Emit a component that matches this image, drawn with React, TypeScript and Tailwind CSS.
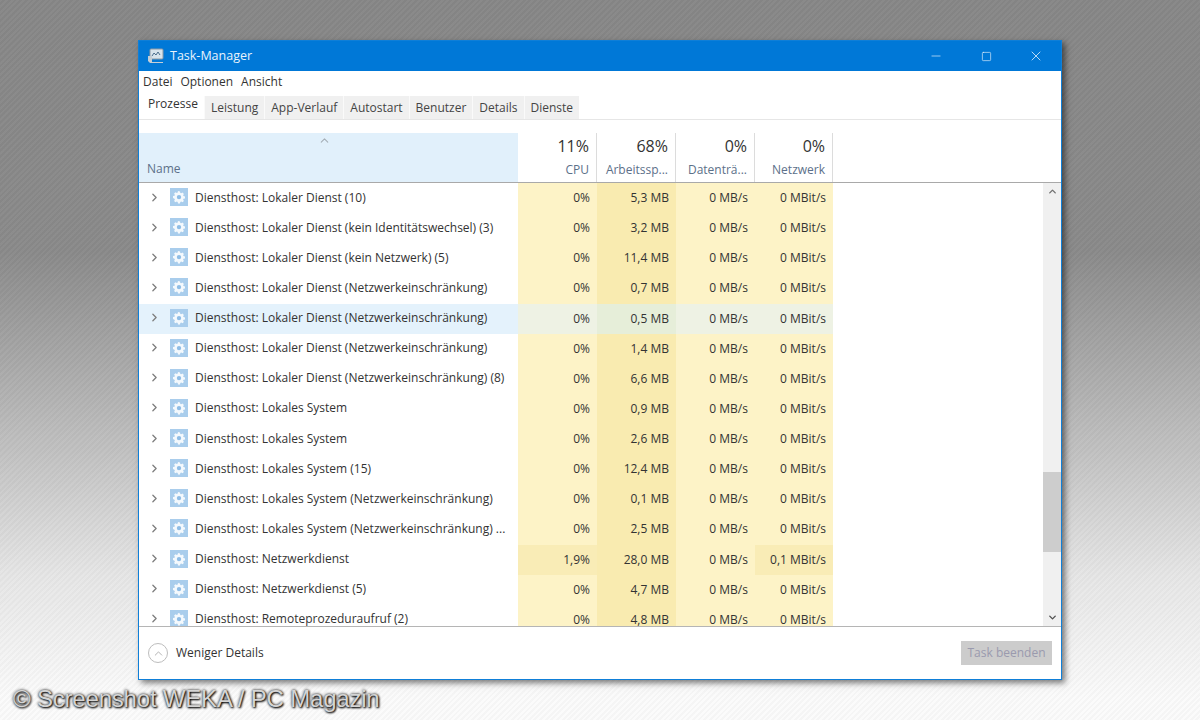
import { ChevronRight, ChevronUp, ChevronDown, Minus, Square, X } from "lucide-react";

const tabs = ["Leistung", "App-Verlauf", "Autostart", "Benutzer", "Details", "Dienste"];

const rows = [
  ["Diensthost: Lokaler Dienst (10)", "0%", "5,3 MB", "0 MB/s", "0 MBit/s"],
  ["Diensthost: Lokaler Dienst (kein Identitätswechsel) (3)", "0%", "3,2 MB", "0 MB/s", "0 MBit/s"],
  ["Diensthost: Lokaler Dienst (kein Netzwerk) (5)", "0%", "11,4 MB", "0 MB/s", "0 MBit/s"],
  ["Diensthost: Lokaler Dienst (Netzwerkeinschränkung)", "0%", "0,7 MB", "0 MB/s", "0 MBit/s"],
  ["Diensthost: Lokaler Dienst (Netzwerkeinschränkung)", "0%", "0,5 MB", "0 MB/s", "0 MBit/s"],
  ["Diensthost: Lokaler Dienst (Netzwerkeinschränkung)", "0%", "1,4 MB", "0 MB/s", "0 MBit/s"],
  ["Diensthost: Lokaler Dienst (Netzwerkeinschränkung) (8)", "0%", "6,6 MB", "0 MB/s", "0 MBit/s"],
  ["Diensthost: Lokales System", "0%", "0,9 MB", "0 MB/s", "0 MBit/s"],
  ["Diensthost: Lokales System", "0%", "2,6 MB", "0 MB/s", "0 MBit/s"],
  ["Diensthost: Lokales System (15)", "0%", "12,4 MB", "0 MB/s", "0 MBit/s"],
  ["Diensthost: Lokales System (Netzwerkeinschränkung)", "0%", "0,1 MB", "0 MB/s", "0 MBit/s"],
  ["Diensthost: Lokales System (Netzwerkeinschränkung) ...", "0%", "2,5 MB", "0 MB/s", "0 MBit/s"],
  ["Diensthost: Netzwerkdienst", "1,9%", "28,0 MB", "0 MB/s", "0,1 MBit/s"],
  ["Diensthost: Netzwerkdienst (5)", "0%", "4,7 MB", "0 MB/s", "0 MBit/s"],
  ["Diensthost: Remoteprozeduraufruf (2)", "0%", "4,8 MB", "0 MB/s", "0 MBit/s"],
];

const headers = [
  ["11%", "CPU", "w-[79px]"],
  ["68%", "Arbeitssp...", "w-[79px]"],
  ["0%", "Datenträ...", "w-[79px]"],
  ["0%", "Netzwerk", "w-[78px]"],
];

const ServiceIcon = () => (
  <svg width="18" height="18" viewBox="0 0 18 18" className="shrink-0">
    <rect width="18" height="18" fill="#a9cdec" />
    <path
      d="M9 3.2l1 .2.3 1.5.9.4 1.3-.8 1.4 1.4-.8 1.3.4.9 1.5.3v2l-1.5.3-.4.9.8 1.3-1.4 1.4-1.3-.8-.9.4-.3 1.5H8l-.3-1.5-.9-.4-1.3.8-1.4-1.4.8-1.3-.4-.9L3 10.1v-2l1.5-.3.4-.9-.8-1.3 1.4-1.4 1.3.8.9-.4.3-1.5z"
      fill="#f4f9fd"
    />
    <circle cx="9" cy="9.1" r="2.2" fill="#8fbde6" />
  </svg>
);

const App = () => {
  return (
    <div className="h-[720px] w-[1200px] overflow-hidden relative pt-[40px] pl-[138px] bg-[repeating-linear-gradient(135deg,rgba(255,255,255,0.025)_0px,rgba(255,255,255,0.025)_2px,rgba(0,0,0,0.025)_2px,rgba(0,0,0,0.025)_4px),linear-gradient(180deg,#878787_0%,#8a8a8a_35%,#c0c0c0_62%,#e6e6e6_80%,#fbfbfb_97%)] font-['Open_Sans','Noto_Sans',sans-serif]">
      <div className="w-[924px] h-[640px] flex flex-col border border-[#0f7fd8] bg-white shadow-[3px_3px_6px_rgba(0,0,0,0.5)]">
        {/* title bar */}
        <div className="h-[30px] shrink-0 bg-[#0078d7] flex items-center pl-[8px] text-white">
          <svg width="18" height="16" viewBox="0 0 18 16" className="shrink-0">
            <rect x="3" y="1" width="13" height="10" rx="1" fill="#d7e3ec" stroke="#8c98a3" />
            <path d="M5 8l2-3 2 2 2-3 2 3" stroke="#4b6d8c" fill="none" />
            <path d="M1 8h4v6h11v1H3l-2-2z" fill="#c5ced6" />
          </svg>
          <span className="ml-[5px] text-[12.5px] text-[#e8f3fc]">Task-Manager</span>
          <div className="ml-auto flex items-center">
            <div className="w-[50px] flex justify-center"><Minus size={14} strokeWidth={1.2} color="#dcecf9" /></div>
            <div className="w-[50px] flex justify-center"><Square size={11} strokeWidth={1.4} color="#e8f3fc" /></div>
            <div className="w-[50px] flex justify-center"><X size={16} strokeWidth={1.2} color="#e8f3fc" /></div>
          </div>
        </div>

        {/* menu */}
        <div className="h-[21px] shrink-0 flex items-center gap-[8px] pl-[4px] text-[12px] text-[#333]">
          <span>Datei</span>
          <span>Optionen</span>
          <span>Ansicht</span>
        </div>

        {/* tabs */}
        <div className="h-[28px] shrink-0 flex items-end border-b border-[#e6e6e6] pl-[2px] border-t-[#f4f4f4] text-[12px] text-[#444]">
          <div className="h-[27px] w-[63px] pl-[7px] pt-[3px] bg-white text-[#333]">Prozesse</div>
          {tabs.map((t) => (
            <div key={t} className="h-[23px] px-[6px] flex items-center bg-[#f0f0f0] border-l border-[#fafafa]">
              {t}
            </div>
          ))}
        </div>

        {/* column headers */}
        <div className="mt-[13px] h-[50px] shrink-0 flex border-b border-[#a9a9a9]">
          <div className="w-[379px] bg-[#e1f0fb] relative flex items-end pl-[8px] pb-[4px] text-[12px] text-[#5c7089]">
            <ChevronUp size={13} color="#a5aeb6" strokeWidth={2} className="absolute left-[179px] top-[1px]" />
            Name
          </div>
          {headers.map(([pct, label, w]) => (
            <div key={label} className={`${w} border-r border-[#dcdcdc] flex flex-col items-end pr-[7px]`}>
              <span className="text-[16px] leading-[20px] mt-[3px] text-[#333]">{pct}</span>
              <span className="text-[12px] leading-[16px] mt-[6px] text-[#5c7089]">{label}</span>
            </div>
          ))}
        </div>

        {/* rows */}
        <div className="h-[444px] shrink-0 overflow-hidden flex relative border-b border-[#b5b5b5]">
          <div className="w-[904px] shrink-0">
            {rows.map((r, i) => {
              const hover = i === 4;
              const busy = i === 12;
              return (
                <div key={i} className="h-[30.13px] flex items-center text-[12px] text-[#333]">
                  <div className={`w-[379px] h-full flex items-center pl-[9px] ${hover ? "bg-[#e4f2fc]" : ""}`}>
                    <ChevronRight size={13} color="#7d7d7d" strokeWidth={2.4} className="mb-[2px]" />
                    <div className="ml-[9px] mb-[2px]"><ServiceIcon /></div>
                    <span className="ml-[7px] whitespace-nowrap mb-[1px]">{r[0]}</span>
                  </div>
                  <div className={`w-[79px] h-full flex items-center justify-end pr-[7px] ${hover ? "bg-[#eef2e4]" : busy ? "bg-[#f9ecb6]" : "bg-[#fdf3c7]"}`}>{r[1]}</div>
                  <div className={`w-[79px] h-full flex items-center justify-end pr-[7px] ${hover ? "bg-[#e6eed9]" : "bg-[#f9ebb0]"}`}>{r[2]}</div>
                  <div className={`w-[79px] h-full flex items-center justify-end pr-[7px] ${hover ? "bg-[#eef2e4]" : "bg-[#fdf3c7]"}`}>{r[3]}</div>
                  <div className={`w-[78px] h-full flex items-center justify-end pr-[7px] ${hover ? "bg-[#eef2e4]" : busy ? "bg-[#f9ecb6]" : "bg-[#fdf3c7]"}`}>{r[4]}</div>
                </div>
              );
            })}
          </div>
          {/* scrollbar */}
          <div className="w-[18px] shrink-0 bg-[#f0f0f0] flex flex-col items-center justify-between relative py-[3px]">
            <ChevronUp size={11} color="#707070" strokeWidth={3} />
            <div className="absolute left-0 right-0 top-[289px] h-[80px] bg-[#cdcdcd]" />
            <ChevronDown size={11} color="#505050" strokeWidth={3} />
          </div>
        </div>

        {/* footer */}
        <div className="flex-1 flex items-center pl-[9px] pr-[9px]">
          <div className="w-[20px] h-[20px] rounded-full border border-[#bdbdbd] flex items-center justify-center">
            <ChevronUp size={13} color="#a8a8a8" strokeWidth={1.6} />
          </div>
          <span className="ml-[8px] text-[12px] text-[#333]">Weniger Details</span>
          <div className="ml-auto w-[91px] h-[24px] bg-[#cccccc] flex items-center justify-center text-[12px] text-[#9a9aae]">
            Task beenden
          </div>
        </div>
      </div>

      <div className="absolute left-[13px] top-[684px] text-[24px] leading-[30px] tracking-[-0.2px] text-[#d4d4d4] font-['Liberation_Sans',sans-serif] [text-shadow:0_0_3px_#000,1px_1px_2px_#000]">
        © Screenshot WEKA / PC Magazin
      </div>
    </div>
  );
};

export default App;
